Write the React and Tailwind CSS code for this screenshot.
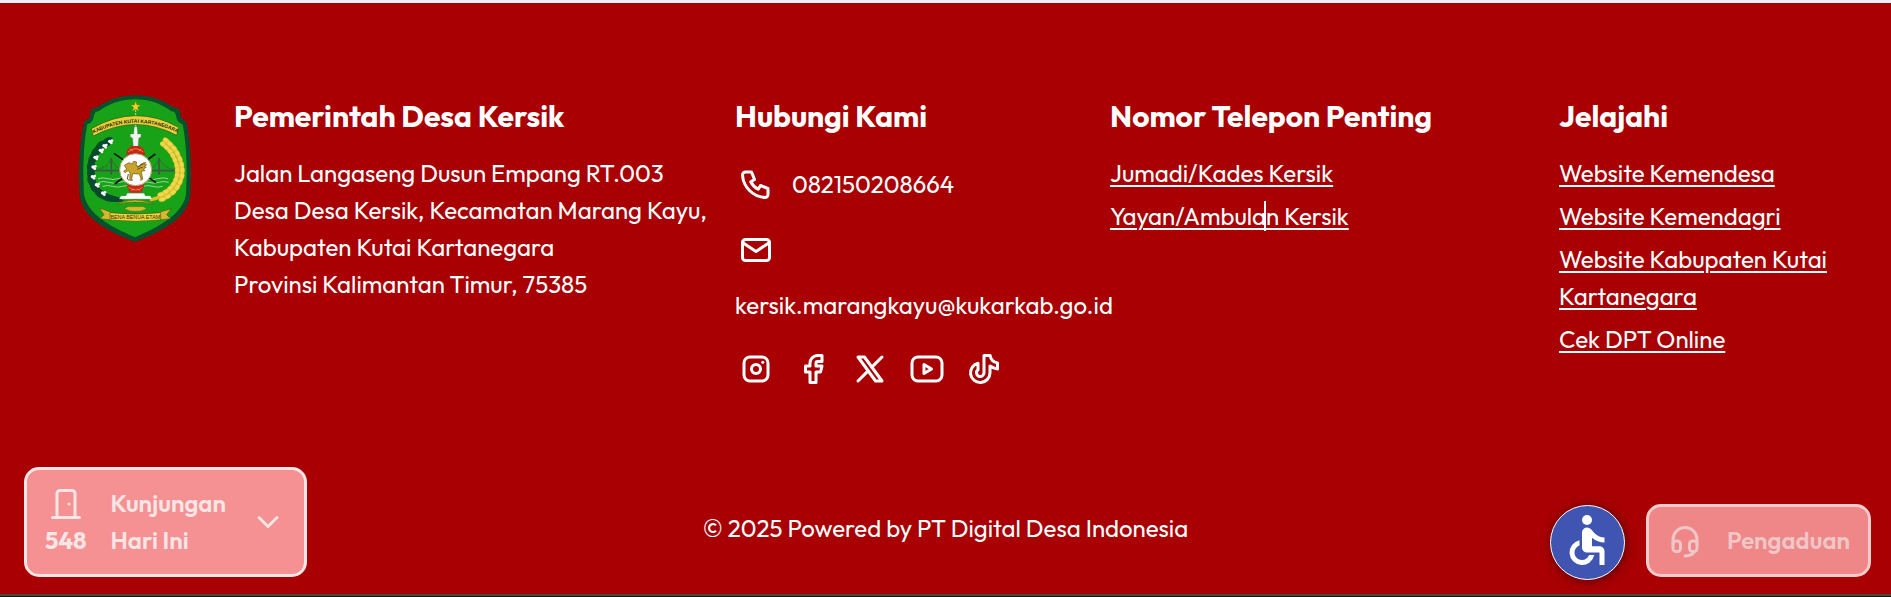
import {
  TbBrandFacebook,
  TbBrandInstagram,
  TbBrandTiktok,
  TbBrandX,
  TbBrandYoutube,
  TbChevronDown,
  TbDoor,
  TbHeadset,
  TbMail,
  TbPhone,
} from "react-icons/tb";
import { MdAccessible } from "react-icons/md";

const socials = [
  { label: "Instagram", Icon: TbBrandInstagram },
  { label: "Facebook", Icon: TbBrandFacebook },
  { label: "X", Icon: TbBrandX },
  { label: "YouTube", Icon: TbBrandYoutube },
  { label: "TikTok", Icon: TbBrandTiktok },
];

const websites = [
  "Website Kemendesa",
  "Website Kemendagri",
  "Website Kabupaten Kutai Kartanegara",
  "Cek DPT Online",
];

const cottonLeaves = [
  [142, 186, -35], [122, 198, -45], [108, 216, -55], [98, 236, -65], [93, 258, -80],
  [93, 280, -95], [95, 302, -110], [104, 322, -125], [120, 340, -140],
];

const cottonBolls = [
  [152, 184], [135, 197], [124, 211], [108, 232], [102, 261], [100, 290], [112, 314], [131, 339],
];

const riceGrains = [
  [314, 188, 35], [325, 198, 40], [336, 210, 50], [345, 224, 60], [352, 239, 70],
  [357, 255, 80], [359, 271, 90], [358, 287, 100], [353, 303, 112], [345, 318, 125],
  [334, 331, 140], [320, 342, 155], [305, 350, 165],
];

function Crest() {
  return (
    <svg viewBox="54 45 342 444" className="h-[148px] w-[114px] shrink-0" role="img" aria-label="Lambang">
      <path
        d="M226 46C182 46 141 60 112 82Q91 80 90 106Q88 118 73 124C55 200 56 280 59 345C66 415 143 454 225 486C307 454 384 415 391 345C394 280 395 200 379 124Q364 118 362 106Q361 80 340 82C311 60 270 46 226 46Z"
        fill="#06502c"
      />
      <path
        d="M226 58C186 58 146 71 116 94Q103 92 101 112Q98 128 82 133C68 205 69 280 72 343C80 400 150 440 225 472C300 440 370 400 378 343C381 280 382 205 368 133Q352 128 349 112Q347 92 334 94C304 71 266 58 226 58Z"
        fill="#17a217"
      />
      <path d="M227 88v60" stroke="#fff" strokeWidth="2" strokeDasharray="8 3" />
      <path d="M227 64l4 11h11l-9 7 3 11-9-6-10 6 4-11-9-7h11z" fill="#f4d21e" stroke="#8a6a10" strokeWidth="1" />

      {/* upper banner */}
      <path d="M94 146Q226 70 356 142L350 166Q226 100 100 168Z" fill="#e8cf3c" stroke="#33520f" strokeWidth="2" />
      <path id="crest-arc" d="M97 162Q226 96 356 160" fill="none" />
      <text className="font-['Liberation_Sans',Arial,sans-serif] text-[15px] font-bold" fill="#1d2b10">
        <textPath href="#crest-arc" startOffset="50%" textAnchor="middle">KABUPATEN KUTAI KARTANEGARA</textPath>
      </text>

      {/* bridge and river */}
      <g stroke="#3b5a46" strokeWidth="2" fill="none">
        <path d="M100 272H350" strokeWidth="5" />
        <path d="M154 234V284M297 234V284" strokeWidth="5" />
        <path d="M106 270Q142 264 154 236Q164 264 190 268M262 268Q286 264 297 236Q310 264 346 270" />
        <path d="M120 262v10M130 258v14M140 252v20M166 256v16M176 264v8M274 264v8M285 256v16M309 256v16M320 262v10" strokeWidth="1" />
      </g>
      <g stroke="#d8efd8" strokeWidth="2" fill="none">
        <path d="M114 296q15-5 30 0t30 0 30 0 30 0 30 0 30 0 30 0" />
        <path d="M116 307q15-5 30 0t30 0 30 0 30 0 30 0 30 0 30 0" />
        <path d="M128 319q15-5 30 0t30 0 30 0 30 0 30 0 30 0" />
      </g>

      {/* cotton branch */}
      <path d="M146 188C96 214 80 262 104 316Q120 346 186 360" fill="none" stroke="#064a2c" strokeWidth="12" />
      {cottonLeaves.map(([x, y, r], i) => (
        <ellipse key={i} cx={x} cy={y} rx="19" ry="12" fill="#064a2c" transform={`rotate(${r} ${x} ${y})`} />
      ))}
      <path d="M118 350q34-6 54 6l22 6-22 4q-38 2-54-16z" fill="#064a2c" />
      {cottonBolls.map(([x, y], i) => (
        <g key={i} fill="#fff">
          <circle cx={x - 3} cy={y} r="5" />
          <circle cx={x + 4} cy={y - 2} r="4" />
          <circle cx={x + 2} cy={y + 5} r="4" />
        </g>
      ))}

      {/* rice branch */}
      <path d="M308 184C352 204 376 258 352 308Q334 344 270 360" fill="none" stroke="#d9c02c" strokeWidth="10" />
      {riceGrains.map(([x, y, r], i) => (
        <g key={i} transform={`rotate(${r} ${x} ${y})`} fill="#efd94b" stroke="#c3a624" strokeWidth="1">
          <ellipse cx={x} cy={y - 8} rx="11" ry="7" />
          <ellipse cx={x} cy={y + 7} rx="11" ry="7" />
        </g>
      ))}

      {/* monument */}
      <path d="M162 220l126 88M164 312l122-90" stroke="#18120e" strokeWidth="5" />
      <path d="M223 140h8l2 22h10v8l-7 5-2 26h-14l-2-26-7-5v-8h10z" fill="#f2f2f2" stroke="#6d7f76" strokeWidth="1" />
      <path d="M214 198h25l12 9 5 18h-58l5-18z" fill="#c4271c" />
      <path d="M204 216q22-20 46 0M210 206l8 8M244 206l-8 8" fill="none" stroke="#e9b63a" strokeWidth="2" />
      <path d="M200 314h54l-10 24h-34z" fill="#c4271c" />
      <path d="M206 322q22 16 42 0M214 332l8-6M240 332l-8-6" fill="none" stroke="#e9b63a" strokeWidth="2" />
      <circle cx="227" cy="269" r="48" fill="#fff" stroke="#b9a06a" strokeWidth="3" />
      <path
        d="M193 256l14-8 10 4 4-8 9 2-2 10 10 4q4-12 20-13l-6 7 8 0-7 6 6 2-9 5 5 5-11 2 4 24-6 3 1-5-5-14-20-1-3 15 3 5-9 0 1-21-5-9-9 7-5-4 9-7z"
        fill="#c9a42a"
        stroke="#66500f"
        strokeWidth="2"
      />
      <path d="M205 282l-3 15 5 4M232 262q8-8 18-10M232 268q8-5 16-6" fill="none" stroke="#66500f" strokeWidth="3" />
      <path d="M202 340h50l4 8h15l5 9h-98l5-9h15z" fill="#fafafa" stroke="#9bb1a2" strokeWidth="1" />
      <path d="M170 374Q226 346 282 374Q226 358 170 374Z" fill="#d7c02d" stroke="#5a6414" strokeWidth="2" />
      <path d="M204 380h46l10 6q-14 8-33 8t-34-8z" fill="#d7b82d" stroke="#6b6014" strokeWidth="1" />

      {/* lower banner */}
      <path d="M118 384l34 12v24l-32-4 12-12zM334 386l-34 10v24l32-4-12-12z" fill="#d6b92f" stroke="#4b5a12" strokeWidth="2" />
      <path d="M150 398Q226 406 302 398V420Q226 428 150 420Z" fill="#ecd23d" stroke="#4b5a12" strokeWidth="2" />
      <text
        x="226"
        y="418"
        textAnchor="middle"
        className="font-['Liberation_Sans',Arial,sans-serif] text-[16px]"
        fill="#2b3210"
      >
        BENA BENUA ETAM
      </text>
    </svg>
  );
}

function Column({ title, children }) {
  return (
    <section className="min-w-0 pt-[3px]">
      <h2 className="mb-5 text-[30px] leading-[37px] font-bold whitespace-nowrap">{title}</h2>
      {children}
    </section>
  );
}

const linkClass = "underline decoration-2 underline-offset-3";

export default function App() {
  return (
    <div className="flex min-h-screen flex-col border-t-[3px] border-[#f0eff5] bg-[#a80003] font-['Outfit','Roboto',sans-serif] text-[24px] leading-[37px] text-white">
      <footer className="flex-1">
        <div className="grid grid-cols-[657fr_375fr_449fr_254fr] px-[78px] pt-[92px]">
          <div className="flex gap-[42px]">
            <Crest />
            <Column title="Pemerintah Desa Kersik">
              <address className="whitespace-nowrap not-italic">
                Jalan Langaseng Dusun Empang RT.003
                <br />
                Desa Desa Kersik, Kecamatan Marang Kayu,
                <br />
                Kabupaten Kutai Kartanegara
                <br />
                Provinsi Kalimantan Timur, 75385
              </address>
            </Column>
          </div>

          <Column title="Hubungi Kami">
            <div className="flex items-center gap-[15px] pt-2">
              <span className="p-[3px]">
                <TbPhone size={36} />
              </span>
              <span>082150208664</span>
            </div>
            <div className="pt-6">
              <span className="block p-[3px]">
                <TbMail size={36} />
              </span>
              <p className="pt-4">kersik.marangkayu@kukarkab.go.id</p>
            </div>
            <div className="flex gap-[15px] pt-6">
              {socials.map(({ label, Icon }) => (
                <a key={label} href="#" aria-label={label} className="p-[3px]">
                  <Icon size={36} />
                </a>
              ))}
            </div>
          </Column>

          <Column title="Nomor Telepon Penting">
            <ul className="space-y-[6px]">
              <li>
                <a href="#" className={linkClass}>Jumadi/Kades Kersik</a>
              </li>
              <li>
                <a href="#" className={linkClass}>
                  Yayan/Ambula
                  <span className="relative">
                    <span className="absolute inset-y-0 right-0 w-[2px] bg-white" />
                  </span>
                  n Kersik
                </a>
              </li>
            </ul>
          </Column>

          <Column title="Jelajahi">
            <ul className="-mr-6 space-y-[6px]">
              {websites.map((name) => (
                <li key={name}>
                  <a href="#" className={linkClass}>{name}</a>
                </li>
              ))}
            </ul>
          </Column>
        </div>
        <p className="pt-[120px] pb-10 text-center">© 2025 Powered by PT Digital Desa Indonesia</p>
      </footer>
      <div className="h-[3px] border-b border-[#1c1408] bg-[#454838]" />

      <button
        type="button"
        className="fixed bottom-5 left-6 flex items-center gap-6 rounded-[15px] border-[3px] border-[#f8e5e5] bg-[#f59192] px-[18px] py-[15px] text-left font-semibold text-[#f8e5e5]"
      >
        <span className="flex flex-col items-center">
          <TbDoor size={36} />
          <span className="font-bold">548</span>
        </span>
        <span>
          Kunjungan
          <br />
          Hari Ini
        </span>
        <TbChevronDown size={36} />
      </button>

      <div className="fixed right-5 bottom-5 flex items-end gap-[21px]">
        <button
          type="button"
          aria-label="Aksesibilitas"
          className="-mb-[3px] flex size-[75px] items-center justify-center rounded-full border border-white bg-[#4054b2] pb-[6px] shadow-[1px_1px_10px_rgba(0,0,0,0.5)]"
        >
          <MdAccessible size={60} />
        </button>
        <button
          type="button"
          className="flex items-center gap-6 rounded-[15px] border-[3px] border-[#f0cccc] bg-[#ef8687] px-[18px] py-[15px] font-semibold text-[#f0c6c6]"
        >
          <TbHeadset size={36} />
          Pengaduan
        </button>
      </div>
    </div>
  );
}
